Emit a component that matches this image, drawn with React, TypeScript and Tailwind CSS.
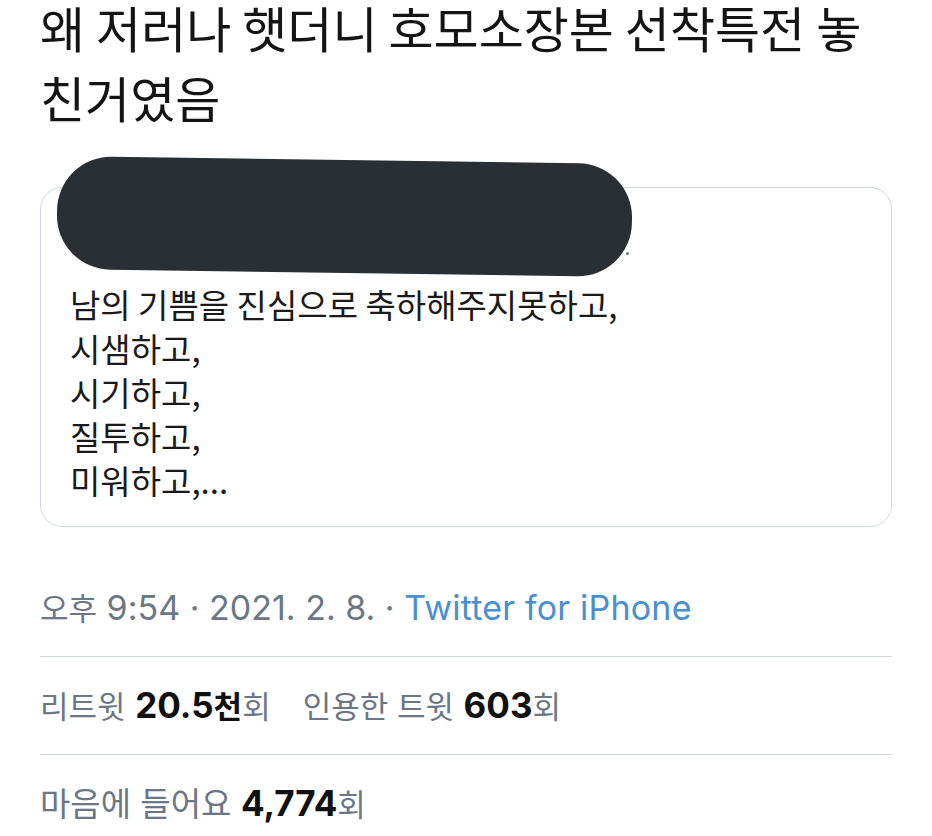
export default function App() {
  const lines = ["남의 기쁨을 진심으로 축하해주지못하고,", "시샘하고,", "시기하고,", "질투하고,", "미워하고,..."];
  const ko = "text-[31px]";
  const num = "text-[35px] font-bold text-[#111]";

  return (
    <div
      className="h-[836px] w-[932px] overflow-hidden bg-white px-[40px]"
      style={{ fontFamily: "'Noto Sans CJK KR', sans-serif" }}
    >
      {/* Tweet text */}
      <h1 className="-mt-[8px] text-[49px] font-normal leading-[70px] text-[#141414]">
        왜 저러나 햇더니 호모소장본 선착특전 놓
        <br />
        친거였음
      </h1>

      {/* Quoted tweet card */}
      <div className="relative mt-[55px]">
        <div className="rounded-[22px] border border-[#d3dadf] px-[29px] pb-[24px] pt-[94px]">
          <div className="text-[33px] leading-[44px] text-[#1a1a1a]">
            {lines.map((l, i) => (
              <div key={i}>{l}</div>
            ))}
          </div>
        </div>
        {/* Redacted header */}
        <span className="pointer-events-none absolute left-[17px] top-[-27px] h-[113px] w-[575px] rotate-[0.8deg] rounded-[54px] bg-[#2a2f33]" />
        <span className="absolute left-[586px] top-[65px] h-[3px] w-[3px] rounded-full bg-[#6b7785]" />
      </div>

      {/* Meta */}
      <div
        className="mt-[31px] text-[34px] text-[#6b7785]"
        style={{ fontFamily: "Inter, 'Noto Sans CJK KR', sans-serif" }}
      >
        <div className="flex h-[98px] items-center">
          <span>
            <span className={ko}>오후</span> 9:54 · 2021. 2. 8. ·{" "}
            <span className="tracking-[0.2px] text-[#4a8fcf]">Twitter for iPhone</span>
          </span>
        </div>
        <div className="flex h-[98px] items-center border-t border-[#d3dadf]">
          <span>
            <span className={ko}>리트윗</span>{" "}
            <b className={num}>
              20.5<span className={ko}>천</span>
            </b>
            <span className={ko}>회</span>
          </span>
          <span className="ml-[32px]">
            <span className={ko}>인용한 트윗</span> <b className={num}>603</b>
            <span className={ko}>회</span>
          </span>
        </div>
        <div className="flex h-[98px] items-center border-t border-[#d3dadf]">
          <span>
            <span className="text-[33px]">마음에 들어요</span> <b className={num}>4,774</b>
            <span className={ko}>회</span>
          </span>
        </div>
      </div>
    </div>
  );
}
